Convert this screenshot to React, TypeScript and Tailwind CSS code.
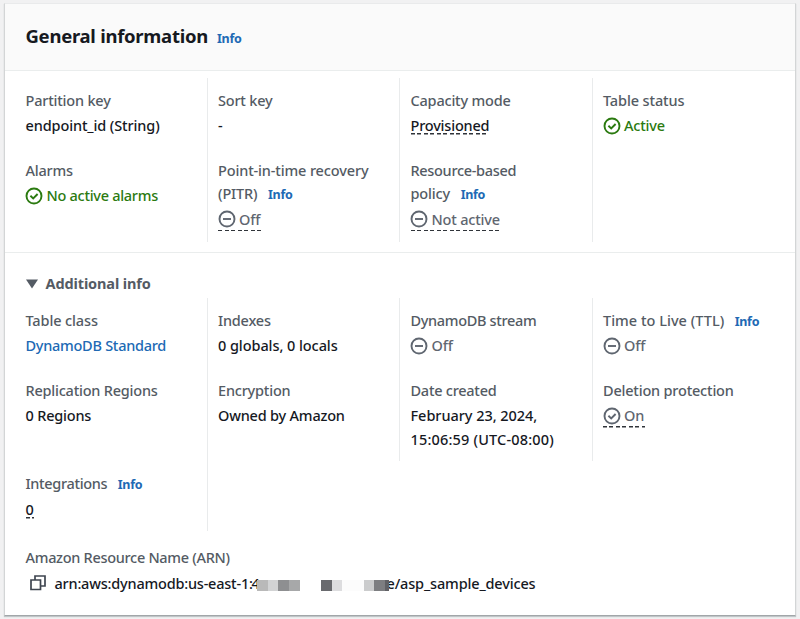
import type { ReactNode } from "react";

function StatusIcon({ kind }: { kind: "check" | "minus" }) {
  return (
    <svg viewBox="0 0 18 18" className="mr-[3.5px] ml-[-0.5px] h-[18px] w-[18px] shrink-0 -mt-[0.5px]" fill="none" stroke="currentColor" strokeWidth="1.9">
      <circle cx="9" cy="9" r="7.5" />
      {kind === "check" ? <path d="M5.4 8.8 8.2 11.4 12.6 7" /> : <path d="M5 9h8" />}
    </svg>
  );
}

function Info({ className = "ml-[10.5px]" }: { className?: string }) {
  return (
    <a className={`inline-block font-['Noto_Sans',sans-serif] text-[12.5px] leading-none font-bold tracking-[-0.3px] text-[#2069b4] ${className}`}>
      Info
    </a>
  );
}

function Label({ children, className = "" }: { children: ReactNode; className?: string }) {
  return <div className={`whitespace-nowrap text-[#545b64] ${className}`}>{children}</div>;
}

function Value({ children, className = "mt-[1.5px]" }: { children: ReactNode; className?: string }) {
  return <div className={`flex whitespace-nowrap ${className}`}>{children}</div>;
}

function Status({ kind, children, className = "text-[#5f6670]" }: { kind: "check" | "minus"; children: ReactNode; className?: string }) {
  return (
    <span className={`flex items-center ${className}`}>
      <StatusIcon kind={kind} />
      <span>{children}</span>
    </span>
  );
}

function Dashed({ children, className = "" }: { children: ReactNode; className?: string }) {
  return (
    <span
      className={`block bg-[repeating-linear-gradient(90deg,#30343a_0_4px,transparent_4px_6.5px)] bg-[length:100%_1.5px] bg-no-repeat ${className}`}
    >
      {children}
    </span>
  );
}

function Cell({ children, className = "" }: { children: ReactNode; className?: string }) {
  return <div className={`pl-[10.5px] ${className}`}>{children}</div>;
}

const divider = "border-r border-[#e9ebec]";

export default function App() {
  return (
    <div className="h-[619px] w-[800px] overflow-hidden bg-[#f1f1f2] pt-[3px] pl-[4px] font-['Noto_Sans','Open_Sans',sans-serif] text-[14.5px] leading-[23.5px] font-medium tracking-[-0.2px] text-[#16191f]">
      <main className="h-[613px] w-[792px] border border-t-[#e9eaeb] border-r-[#d3d5d6] border-b-[#a2a6a9] border-l-[#d3d5d6] bg-white shadow-[0_1px_1px_rgba(0,28,36,0.2)]">
        <header className="flex h-[67px] items-center border-b border-[#eaeded] bg-[#fafafa] pl-[20.5px]">
          <h1 className="-mt-[3px] text-[18.5px] font-bold tracking-[-0.27px]">General information</h1>
          <Info className="mt-[4px] ml-[9px]" />
        </header>

        <section className="h-[182px] border-b border-[#eaeded] pt-[7px] pl-[10px]">
          <div className="grid h-[164px] grid-cols-[192.5px_192.5px_192.5px_192.5px]">
            <Cell className={`pt-[11px] ${divider}`}>
              <Label>Partition key</Label>
              <Value className="mt-[1.5px] tracking-[-0.12px]">endpoint_id (String)</Value>
              <Label className="mt-[21.5px]">Alarms</Label>
              <Value className="mt-[1.5px] tracking-[-0.28px]"><Status kind="check" className="text-[#2b7a10]">No active alarms</Status></Value>
            </Cell>
            <Cell className={`pt-[11px] ${divider}`}>
              <Label>Sort key</Label>
              <Value>-</Value>
              <Label className="mt-[21.5px] tracking-[-0.14px]">Point-in-time recovery<br /><span className="relative -top-px">(PITR)<Info /></span></Label>
              <Value><Dashed className="bg-bottom pr-px"><Status kind="minus">Off</Status></Dashed></Value>
            </Cell>
            <Cell className={`pt-[11px] ${divider}`}>
              <Label>Capacity mode</Label>
              <Value><Dashed className="bg-[position:0_19px]">Provisioned</Dashed></Value>
              <Label className="mt-[21.5px] tracking-[-0.32px]">Resource-based<br /><span className="relative -top-px tracking-[-0.14px]">policy<Info /></span></Label>
              <Value><Dashed className="bg-bottom"><Status kind="minus">Not active</Status></Dashed></Value>
            </Cell>
            <Cell className="pt-[11px]">
              <Label className="tracking-[-0.12px]">Table status</Label>
              <Value><Status kind="check" className="text-[#2b7a10]">Active</Status></Value>
            </Cell>
          </div>
        </section>

        <section className="pt-[19px] pl-[10px]">
          <h2 className="flex items-center pl-[10.5px] font-bold tracking-[-0.12px] text-[#545b64]">
            <svg viewBox="0 0 12 10" className="mr-[8px] h-[10px] w-[12px]" fill="currentColor"><path d="M0 .5h12L6 9.5z" /></svg>
            <span>Additional info</span>
          </h2>
          <div className="mt-[2.5px] grid grid-cols-[192.5px_192.5px_192.5px_192.5px] grid-rows-[163px_70px]">
            <Cell className={`row-span-2 pt-[11px] ${divider}`}>
              <Label className="tracking-[-0.12px]">Table class</Label>
              <Value className="mt-[1.5px] tracking-[-0.27px] text-[#2069b4]">DynamoDB Standard</Value>
              <Label className="mt-[21.5px] tracking-[-0.22px]">Replication Regions</Label>
              <Value>0 Regions</Value>
              <Label className="mt-[44.5px] tracking-[-0.33px]">Integrations<Info /></Label>
              <Value className="mt-[1.5px] pt-[0.5px]"><Dashed className="bg-[position:0_19px]">0</Dashed></Value>
            </Cell>
            <Cell className={`pt-[11px] ${divider}`}>
              <Label>Indexes</Label>
              <Value className="mt-[1.5px] tracking-[-0.07px]">0 globals, 0 locals</Value>
              <Label className="mt-[21.5px]">Encryption</Label>
              <Value>Owned by Amazon</Value>
            </Cell>
            <Cell className={`pt-[11px] ${divider}`}>
              <Label className="tracking-[-0.33px]">DynamoDB stream</Label>
              <Value><Status kind="minus">Off</Status></Value>
              <Label className="mt-[21.5px] tracking-[-0.25px]">Date created</Label>
              <Value className="mt-[1.5px] tracking-[-0.04px]"><span>February 23, 2024,<br /><span className="tracking-[0.17px]">15:06:59 (UTC-08:00)</span></span></Value>
            </Cell>
            <Cell className="pt-[11px]">
              <Label className="tracking-[0.02px]">Time to Live (TTL)<Info /></Label>
              <Value><Status kind="minus">Off</Status></Value>
              <Label className="mt-[21.5px]">Deletion protection</Label>
              <Value><Dashed className="bg-bottom pr-px"><Status kind="check">On</Status></Dashed></Value>
            </Cell>
          </div>
          <Cell className="pt-[15px]">
            <Label className="tracking-[-0.3px]">Amazon Resource Name (ARN)</Label>
            <Value className="mt-[2px] items-center pl-[4px]">
              <svg viewBox="0 0 16 16" className="-mt-px mr-[9px] h-[16px] w-[16px]" fill="none" stroke="#3f4650" strokeWidth="1.7">
                <path d="M1 5h9.5v9.5H1zM5 5V1h10v10h-4.5" />
              </svg>
              <span className="w-[197px] tracking-[-0.21px]">arn:aws:dynamodb:us-east-1:</span>
              {/* The account number runs on beneath the redaction blocks */}
              <span className="-mr-[3px] w-[8px]">4</span>
              <span className="relative mt-[5px] flex h-[11px] bg-white">
                <i className="w-[11px] bg-[#b9b9b9]" />
                <i className="w-[10px] bg-[#d2d3d4]" />
                <i className="w-[11px] bg-[#8e8f91]" />
                <i className="w-[11px] bg-[#a7a8a9]" />
                <i className="w-[21px]" />
                <i className="w-[11px] bg-[#696a6e]" />
                <i className="w-[10px] bg-[#dddddf]" />
                <i className="w-[22px] bg-[#fcfcfc]" />
                <i className="w-[10px] bg-[#cbcccd]" />
                <i className="w-[11px] bg-[#7d7e81]" />
                <i className="w-[4px] bg-[#606165]" />
              </span>
              <span className="-ml-[2px] tracking-[-0.16px]">e/asp_sample_devices</span>
            </Value>
          </Cell>
        </section>
      </main>
    </div>
  );
}
